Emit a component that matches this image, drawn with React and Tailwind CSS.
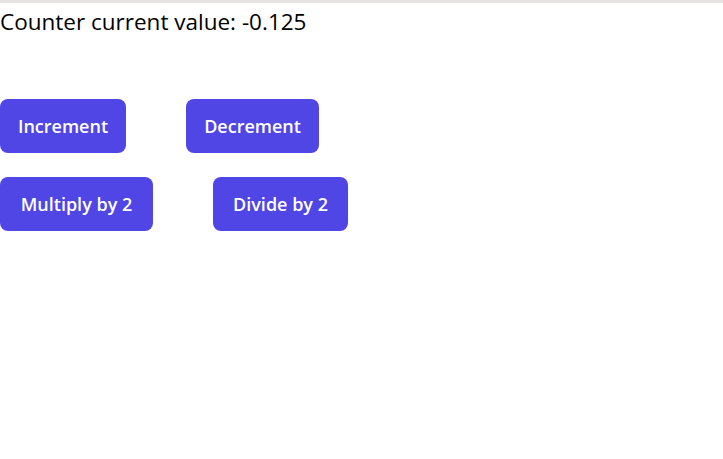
export default function App() {
  const btn = "h-[54px] rounded-lg bg-[#4f46e5] text-white font-semibold text-[18px] leading-none text-center";
  return (
    <div className="min-h-[459px] bg-white border-t-[3px] border-[#e6e4e1] text-black" style={{ fontFamily: '"Open Sans", "Noto Sans", sans-serif' }}>
      <div className="text-[22.5px] leading-[32px] h-[32px] pt-[3px] tracking-[0px]">Counter current value: -0.125</div>
      <div className="mt-[64px] flex flex-col gap-6">
        <div className="flex gap-[60px]">
          <button className={`${btn} w-[126px]`}>Increment</button>
          <button className={`${btn} w-[133px]`}>Decrement</button>
        </div>
        <div className="flex gap-[60px]">
          <button className={`${btn} w-[153px]`}>Multiply by 2</button>
          <button className={`${btn} w-[135px]`}>Divide by 2</button>
        </div>
      </div>
    </div>
  );
}
